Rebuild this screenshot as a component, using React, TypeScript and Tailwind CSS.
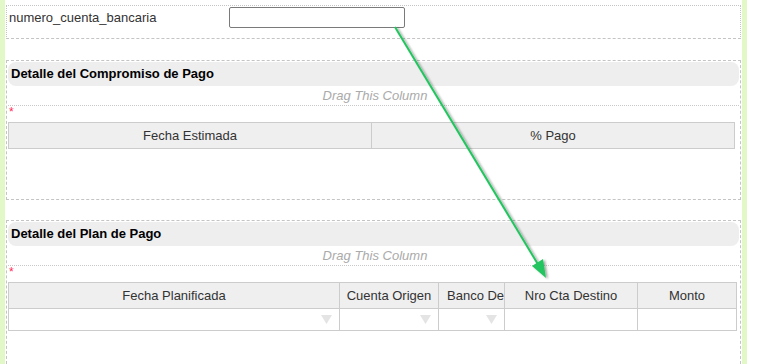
import React from "react";

const font = { fontFamily: '"Liberation Sans", Arial, sans-serif' };

const Caret = () => (
    <svg width="11" height="9" viewBox="0 0 11 9" className="shrink-0">
        <path d="M0 0 L11 0 L5.5 9 Z" fill="#e4e4e4" />
    </svg>
);

const SectionHeader = ({ title }: { title: string }) => (
    <>
        <div className="h-[24px] mx-[1px] mt-[1px] rounded-[8px] bg-[#eeeeee] flex items-center pl-[3px] text-[13px] font-bold text-black">
            {title}
        </div>
        <div className="h-[20px] mx-[1px] border-b border-dotted border-[#c8c8c8] flex items-center justify-center pl-[3px] text-[13px] italic text-[#aaaaaa]">
            Drag This Column
        </div>
        <div className="h-[15px] pl-[2px] text-[12px] leading-[13px] text-[#ff2a55]">*</div>
    </>
);

const App = () => {
    const planCols = [
        { label: "Fecha Planificada", w: "w-[331px]", caret: true, center: true },
        { label: "Cuenta Origen", w: "w-[99px]", caret: true, center: true },
        { label: "Banco De", w: "w-[66px]", caret: true, center: false },
        { label: "Nro Cta Destino", w: "w-[133px]", caret: false, center: true },
        { label: "Monto", w: "w-[99px]", caret: false, center: true },
    ];

    return (
        <div className="relative w-[783px] h-[364px] overflow-hidden bg-white flex" style={font}>
            {/* left strip */}
            <div className="w-[5px] h-full bg-[#e2f8c6]" />

            {/* main */}
            <div className="w-[737px] px-[1px] pt-[5px] flex flex-col">
                {/* numero_cuenta_bancaria */}
                <div className="h-[34px] border border-dotted border-[#c4c4c4] [border-bottom-style:dashed] flex items-start">
                    <div className="w-[222px] pl-[2px] pt-[2px] text-[13px] text-[#333]">
                        numero_cuenta_bancaria
                    </div>
                    <div className="mt-[1px] w-[176px] h-[21px] border border-[#7a7a7a] rounded-[2px] bg-white" />
                </div>

                {/* Detalle del Compromiso de Pago */}
                <div className="mt-[21px] h-[140px] border border-dashed border-[#c4c4c4] flex flex-col">
                    <SectionHeader title="Detalle del Compromiso de Pago" />
                    <div className="mt-[1px] ml-[1px] w-[727px] h-[27px] flex border border-[#cccccc] bg-[#efefef] text-[13px] text-[#333]">
                        <div className="w-[363px] border-r border-[#cccccc] flex items-center justify-center">
                            Fecha Estimada
                        </div>
                        <div className="flex-1 flex items-center justify-center">% Pago</div>
                    </div>
                </div>

                {/* Detalle del Plan de Pago */}
                <div className="mt-[20px] flex-1 border border-dashed border-[#c4c4c4] border-b-0 flex flex-col">
                    <SectionHeader title="Detalle del Plan de Pago" />
                    <div className="mt-[1px] ml-[1px] w-[729px] border border-[#cccccc] text-[13px] text-[#333]">
                        <div className="h-[26px] flex bg-[#efefef] border-b border-[#cccccc]">
                            {planCols.map((c, i) => (
                                <div
                                    key={c.label}
                                    className={`${c.w} ${i < planCols.length - 1 ? "border-r border-[#cccccc]" : "flex-1"} flex items-center overflow-hidden whitespace-nowrap ${c.center ? "justify-center" : "pl-[8px]"}`}
                                >
                                    {c.label}
                                </div>
                            ))}
                        </div>
                        <div className="h-[21px] flex bg-white">
                            {planCols.map((c, i) => (
                                <div
                                    key={c.label}
                                    className={`${c.w} ${i < planCols.length - 1 ? "border-r border-[#cccccc]" : "flex-1"} flex items-center justify-end pr-[7px]`}
                                >
                                    {c.caret && <Caret />}
                                </div>
                            ))}
                        </div>
                    </div>
                </div>
            </div>

            {/* right strip */}
            <div className="w-[5px] h-full bg-[#e2f8c6]" />

            {/* green arrow overlay */}
            <svg className="absolute left-0 top-0 pointer-events-none" width="783" height="364">
                <defs>
                    <filter id="sh" x="-20%" y="-20%" width="140%" height="140%">
                        <feDropShadow dx="2" dy="1" stdDeviation="1" floodColor="#000" floodOpacity="0.35" />
                    </filter>
                </defs>
                <g filter="url(#sh)">
                    <line x1="395" y1="27" x2="539" y2="266" stroke="#22c55e" strokeWidth="2" />
                    <path d="M546 278 L532 266 L543 259 Z" fill="#22c55e" />
                </g>
            </svg>
        </div>
    );
};

export default App;
